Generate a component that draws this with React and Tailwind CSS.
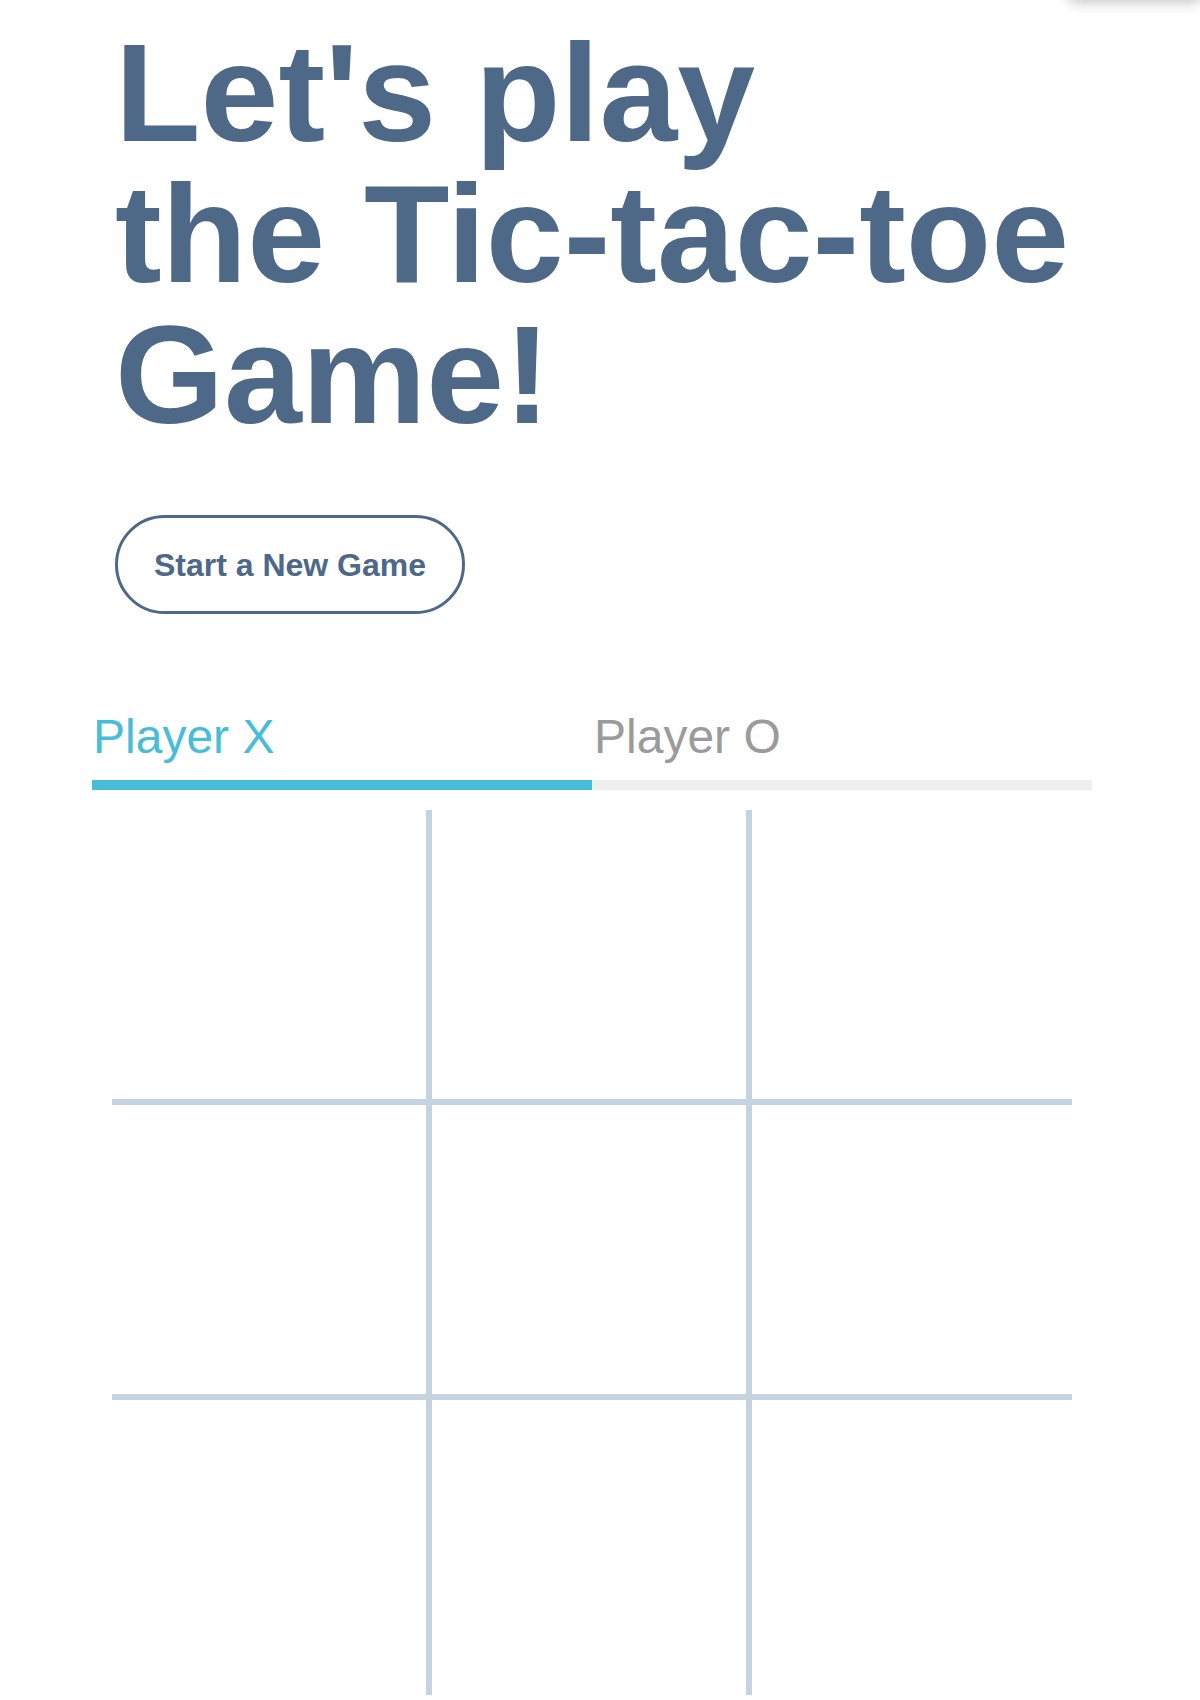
import React, { useState } from 'react';

const App = () => {
  const [player, setPlayer] = useState('X');
  const [cells, setCells] = useState(Array(9).fill(null));

  const handleClick = (i) => {
    if (cells[i]) return;
    const next = [...cells];
    next[i] = player;
    setCells(next);
    setPlayer(player === 'X' ? 'O' : 'X');
  };

  const reset = () => {
    setCells(Array(9).fill(null));
    setPlayer('X');
  };

  return (
    <div
      className="relative w-[1200px] h-[1700px] overflow-hidden bg-white"
      style={{ fontFamily: '"Liberation Sans", Arial, Helvetica, sans-serif' }}
    >
      <div className="absolute -top-[40px] right-0 w-[130px] h-[40px] bg-white shadow-[0_2px_12px_rgba(0,0,0,0.25)]" />

      <div className="w-[1000px] ml-[92px] pt-[22px]">
        <div className="pl-[23px]">
          <h1 className="text-[140px] leading-[141px] font-bold text-[#4e6888]">
            Let's play
            <br />
            the Tic-tac-toe
            <br />
            Game!
          </h1>
          <button
            onClick={reset}
            className="mt-[70px] h-[99px] w-[350px] rounded-full border-[3px] border-[#4e6888] text-[#4e6888] text-[32px] font-bold cursor-pointer"
          >
            Start a New Game
          </button>
        </div>

        <div className="flex mt-[94px]">
          <div className="w-[500px] flex flex-col">
            <span className={`text-[48px] leading-[1.2] pl-px ${player === 'X' ? 'text-[#47bdd7]' : 'text-[#9b9b9b]'}`}>Player X</span>
            <div className={`mt-[14px] h-[10px] ${player === 'X' ? 'bg-[#47bdd7]' : 'bg-[#eeeeee]'}`} />
          </div>
          <div className="w-[500px] flex flex-col">
            <span className={`text-[48px] leading-[1.2] pl-[2px] ${player === 'O' ? 'text-[#47bdd7]' : 'text-[#9b9b9b]'}`}>Player O</span>
            <div className={`mt-[14px] h-[10px] ${player === 'O' ? 'bg-[#47bdd7]' : 'bg-[#eeeeee]'}`} />
          </div>
        </div>

        <div className="mx-[20px] mt-[20px] grid grid-cols-[320px_320px_320px] grid-rows-[295px_295px_295px]">
          {cells.map((c, i) => (
            <div
              key={i}
              onClick={() => handleClick(i)}
              className={`flex items-center justify-center text-[160px] font-bold text-[#4e6888] cursor-pointer border-[#c5d2e0] ${i % 3 !== 2 ? 'border-r-[6px]' : ''} ${i < 6 ? 'border-b-[6px]' : ''}`}
            >
              {c}
            </div>
          ))}
        </div>
      </div>
    </div>
  );
};

export default App;
